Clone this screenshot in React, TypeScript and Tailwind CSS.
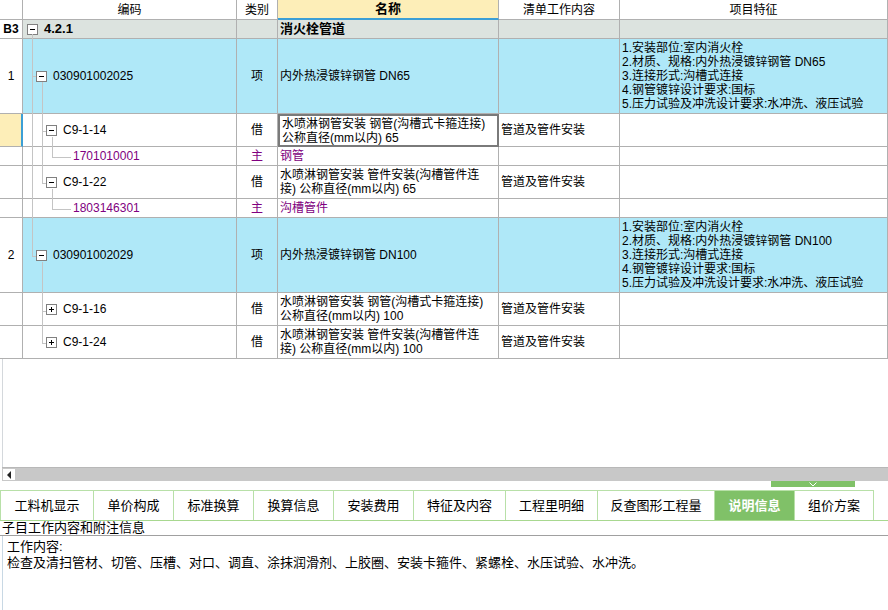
import React from "react";

function Toggle({ open }: { open: boolean }) {
  return (
    <svg width="11" height="11" viewBox="0 0 11 11" className="shrink-0">
      <rect x="0.5" y="0.5" width="10" height="10" fill="#fff" stroke="#808080" />
      <line x1="3" y1="5.5" x2="8" y2="5.5" stroke="#000" />
      {!open && <line x1="5.5" y1="3" x2="5.5" y2="8" stroke="#000" />}
    </svg>
  );
}

type RowDef = {
  h: string;
  num?: React.ReactNode;
  numCls?: string;
  bg: string;
  code: React.ReactNode;
  type?: string;
  purple?: boolean;
  name?: React.ReactNode;
  nameCls?: string;
  content?: string;
  feature?: string[];
};

const features = (dn: string) => [
  "1.安装部位:室内消火栓",
  `2.材质、规格:内外热浸镀锌钢管 ${dn}`,
  "3.连接形式:沟槽式连接",
  "4.钢管镀锌设计要求:国标",
  "5.压力试验及冲洗设计要求:水冲洗、液压试验",
];

function Code({ level, open, text, bold, purple }: { level: number; open?: boolean; text: string; bold?: boolean; purple?: boolean }) {
  const ml = ["ml-[4px]", "ml-[13px]", "ml-[23px]", "ml-[50px]"][level];
  return (
    <div className={`flex items-center gap-[6px] ${ml}`}>
      {open !== undefined && <Toggle open={open} />}
      <span className={`${bold ? "font-bold text-[13px]" : ""} ${purple ? "text-[#800080]" : ""}`}>{text}</span>
    </div>
  );
}

const rows: RowDef[] = [
  {
    h: "h-[19px]",
    num: <b>B3</b>,
    bg: "bg-[#dce3df]",
    code: <Code level={0} open={true} text="4.2.1" bold />,
    name: <span className="font-bold text-[13px]">消火栓管道</span>,
  },
  {
    h: "h-[75px]",
    num: "1",
    bg: "bg-[#afe8f8]",
    code: <Code level={1} open={true} text="030901002025" />,
    type: "项",
    name: "内外热浸镀锌钢管 DN65",
    feature: features("DN65"),
  },
  {
    h: "h-[33px]",
    numCls: "bg-[#fdeeb8] border-r-2 border-r-[#3c9fd6]",
    bg: "bg-white",
    code: <Code level={2} open={true} text="C9-1-14" />,
    type: "借",
    name: (
      <>
        水喷淋钢管安装 钢管(沟槽式卡箍连接)
        <br />
        公称直径(mm以内) 65
      </>
    ),
    nameCls: "border-2 border-[#7a7a7a]",
    content: "管道及管件安装",
  },
  {
    h: "h-[19px]",
    bg: "bg-white",
    code: <Code level={3} text="1701010001" purple />,
    type: "主",
    purple: true,
    name: "钢管",
  },
  {
    h: "h-[33px]",
    bg: "bg-white",
    code: <Code level={2} open={true} text="C9-1-22" />,
    type: "借",
    name: (
      <>
        水喷淋钢管安装 管件安装(沟槽管件连
        <br />
        接) 公称直径(mm以内) 65
      </>
    ),
    content: "管道及管件安装",
  },
  {
    h: "h-[19px]",
    bg: "bg-white",
    code: <Code level={3} text="1803146301" purple />,
    type: "主",
    purple: true,
    name: "沟槽管件",
  },
  {
    h: "h-[75px]",
    num: "2",
    bg: "bg-[#afe8f8]",
    code: <Code level={1} open={true} text="030901002029" />,
    type: "项",
    name: "内外热浸镀锌钢管 DN100",
    feature: features("DN100"),
  },
  {
    h: "h-[33px]",
    bg: "bg-white",
    code: <Code level={2} open={false} text="C9-1-16" />,
    type: "借",
    name: (
      <>
        水喷淋钢管安装 钢管(沟槽式卡箍连接)
        <br />
        公称直径(mm以内) 100
      </>
    ),
    content: "管道及管件安装",
  },
  {
    h: "h-[33px]",
    bg: "bg-white",
    code: <Code level={2} open={false} text="C9-1-24" />,
    type: "借",
    name: (
      <>
        水喷淋钢管安装 管件安装(沟槽管件连
        <br />
        接) 公称直径(mm以内) 100
      </>
    ),
    content: "管道及管件安装",
  },
];

const cell = "border-r border-b border-[#b0b0b0] flex items-center";

const tabs = ["工料机显示", "单价构成", "标准换算", "换算信息", "安装费用", "特征及内容", "工程里明细", "反查图形工程量", "说明信息", "组价方案"];
const tabW = ["w-[93px]", "w-[80px]", "w-[80px]", "w-[80px]", "w-[80px]", "w-[92px]", "w-[92px]", "w-[117px]", "w-[80px]", "w-[79px]"];

export default function App() {
  return (
    <div
      className="w-[888px] h-[610px] overflow-hidden bg-white text-[12px] text-black leading-[14px] flex flex-col"
      style={{ fontFamily: '"Liberation Sans", "Noto Sans CJK SC", sans-serif' }}
    >
      {/* grid */}
      <div className="relative">
        <div className="flex h-[20px]">
          <div className={`w-[23px] ${cell}`} />
          <div className={`w-[214px] justify-center ${cell}`}>编码</div>
          <div className={`w-[41px] justify-center ${cell}`}>类别</div>
          <div className="w-[221px] flex items-center justify-center font-bold text-[13px] bg-[#fdeeb8] border-r border-[#b0b0b0] border-b-2 border-b-[#3c9fd6]">
            名称
          </div>
          <div className={`w-[121px] justify-center ${cell}`}>清单工作内容</div>
          <div className={`flex-1 justify-center ${cell}`}>项目特征</div>
        </div>
        {rows.map((r, i) => (
          <div key={i} className={`flex ${r.h}`}>
            <div className={`w-[23px] justify-center ${cell} ${r.numCls ?? "bg-white"}`}>{r.num}</div>
            <div className={`w-[214px] ${r.bg} ${cell}`}>{r.code}</div>
            <div className={`w-[41px] justify-center ${r.bg} ${cell} ${r.purple ? "text-[#800080]" : ""}`}>{r.type}</div>
            <div
              className={`w-[221px] px-[2px] whitespace-nowrap ${r.bg} ${r.purple ? "text-[#800080]" : ""} ${
                r.nameCls ? `${r.nameCls} flex items-center` : cell
              }`}
            >
              <div>{r.name}</div>
            </div>
            <div className={`w-[121px] px-[2px] whitespace-nowrap ${r.bg} ${cell}`}>{r.content}</div>
            <div className={`flex-1 px-[2px] whitespace-nowrap ${r.bg} ${cell}`}>
              {r.feature && (
                <div>
                  {r.feature.map((f) => (
                    <div key={f}>{f}</div>
                  ))}
                </div>
              )}
            </div>
          </div>
        ))}
        {/* tree connector lines */}
        <svg className="absolute left-0 top-0 pointer-events-none" width="888" height="359">
          <g stroke="#c4c4c4" strokeWidth="1" shapeRendering="crispEdges">
            <line x1="32.5" y1="34" x2="32.5" y2="256.5" />
            <line x1="32" y1="76.5" x2="36" y2="76.5" />
            <line x1="32" y1="256.5" x2="36" y2="256.5" />
            <line x1="42.5" y1="82" x2="42.5" y2="183.5" />
            <line x1="42" y1="131.5" x2="46" y2="131.5" />
            <line x1="42" y1="183.5" x2="46" y2="183.5" />
            <line x1="52.5" y1="137" x2="52.5" y2="157.5" />
            <line x1="52" y1="157.5" x2="71" y2="157.5" />
            <line x1="52.5" y1="189" x2="52.5" y2="209.5" />
            <line x1="52" y1="209.5" x2="71" y2="209.5" />
            <line x1="42.5" y1="262" x2="42.5" y2="343.5" />
            <line x1="42" y1="311.5" x2="46" y2="311.5" />
            <line x1="42" y1="343.5" x2="46" y2="343.5" />
          </g>
        </svg>
      </div>

      {/* empty area */}
      <div className="h-[108px] ml-[2px] border-l border-[#d4d8dc]" />

      {/* horizontal scrollbar */}
      <div className="h-[14px] ml-[2px] flex bg-[#c8c8c8] border-t border-[#b8b8b8]">
        <div className="w-[14px] bg-white border border-[#c8c8c8] flex items-center justify-center">
          <svg width="5" height="8" viewBox="0 0 5 8">
            <path d="M4 0 L0 4 L4 8 Z" fill="#222" />
          </svg>
        </div>
      </div>

      {/* active tab indicator */}
      <div className="h-[9px] flex">
        <div className="ml-[771px] w-[84px] h-[6px] bg-[#80c168] flex items-center justify-center">
          <svg width="8" height="5" viewBox="0 0 8 5">
            <path d="M0.5 0.5 L4 4 L7.5 0.5" stroke="#fff" fill="none" />
          </svg>
        </div>
      </div>

      {/* tabs */}
      <div className="h-[31px] flex border-b border-[#a8d890]">
        <div className="flex border-t border-l border-[#b8e0a8]">
          {tabs.map((t, i) => {
            const active = t === "说明信息";
            return (
              <div
                key={t}
                className={`${tabW[i]} h-[29px] flex items-center justify-center border-r border-[#b8e0a8] text-[13px] ${
                  active ? "bg-[#80c168] text-white font-bold" : ""
                }`}
              >
                {t}
              </div>
            );
          })}
        </div>
      </div>

      {/* description panel */}
      <div className="h-[15px] pl-[2px] flex items-center text-[13px] border-b border-[#a0a0a0]">子目工作内容和附注信息</div>
      <div className="flex-1 ml-[2px] border-l border-[#c8d8e4] pl-[4px] pt-[3px] text-[13px] leading-[16px]">
        <div>工作内容:</div>
        <div>检查及清扫管材、切管、压槽、对口、调直、涂抹润滑剂、上胶圈、安装卡箍件、紧螺栓、水压试验、水冲洗。</div>
      </div>
    </div>
  );
}
